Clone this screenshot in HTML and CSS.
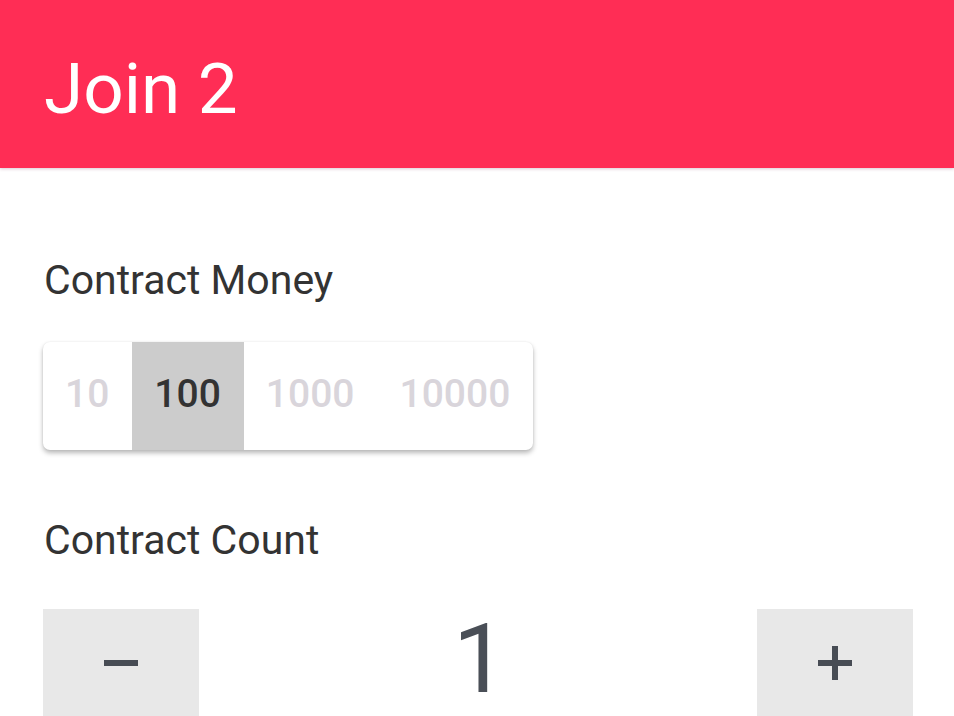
FILE: index.html
```html
<!DOCTYPE html>
<html>
<head>
<meta charset="utf-8">
<link rel="stylesheet" href="styles.css">
</head>
<body>
<header class="appbar">
  <h1 class="title">Join 2</h1>
</header>
<main class="content">
  <h2 class="label label-money">Contract Money</h2>
  <div class="segmented">
    <div class="seg">10</div>
    <div class="seg seg-active">100</div>
    <div class="seg">1000</div>
    <div class="seg">10000</div>
  </div>
  <h2 class="label label-count">Contract Count</h2>
  <div class="counter">
    <div class="step-btn">
      <svg width="40" height="40" viewBox="0 0 40 40"><rect x="3" y="17" width="34" height="6" fill="#474c54"/></svg>
    </div>
    <div class="count">1</div>
    <div class="step-btn">
      <svg width="40" height="40" viewBox="0 0 40 40"><rect x="3" y="17" width="34" height="6" fill="#474c54"/><rect x="17" y="3" width="6" height="34" fill="#474c54"/></svg>
    </div>
  </div>
</main>
</body>
</html>
```
FILE: styles.css
```css
html, body {
  margin: 0;
  padding: 0;
  background: #ffffff;
  font-family: Roboto, "Noto Sans", sans-serif;
  overflow: hidden;
}
.appbar {
  height: 168px;
  background: #ff2d55;
  box-shadow: 0 1px 3px rgba(120, 40, 80, 0.25);
  position: relative;
  z-index: 1;
  display: flex;
  align-items: flex-start;
  padding-left: 44px;
  box-sizing: border-box;
}
.title {
  margin: 0;
  margin-top: 47px;
  font-size: 71px;
  line-height: 84px;
  font-weight: 400;
  color: #ffffff;
}
.content {
  padding: 0 41px 0 43px;
}
.label {
  margin: 0;
  font-size: 41px;
  line-height: 48px;
  font-weight: 400;
  color: #333333;
  padding-left: 1px;
}
.label-money {
  margin-top: 88px;
}
.segmented {
  margin-top: 38px;
  display: inline-flex;
  height: 108px;
  background: #ffffff;
  border-radius: 7px;
  overflow: hidden;
  box-shadow: 0 3px 5px rgba(0, 0, 0, 0.28), 0 0 2px rgba(0, 0, 0, 0.08);
}
.seg {
  display: flex;
  align-items: center;
  justify-content: center;
  padding: 0 23px 4px 22px;
  font-size: 39px;
  font-weight: 500;
  color: #d9d5db;
}
.seg-active {
  background: #cccccc;
  color: #333333;
}
.label-count {
  margin-top: 66px;
}
.counter {
  margin-top: 45px;
  display: flex;
  justify-content: space-between;
  align-items: flex-start;
}
.step-btn {
  width: 156px;
  height: 107px;
  background: #e8e8e8;
  display: flex;
  align-items: center;
  justify-content: center;
}
.count {
  margin-top: 2px;
  font-size: 96px;
  line-height: 96px;
  font-weight: 400;
  color: #4a4f57;
  padding-left: 4px;
}
```
